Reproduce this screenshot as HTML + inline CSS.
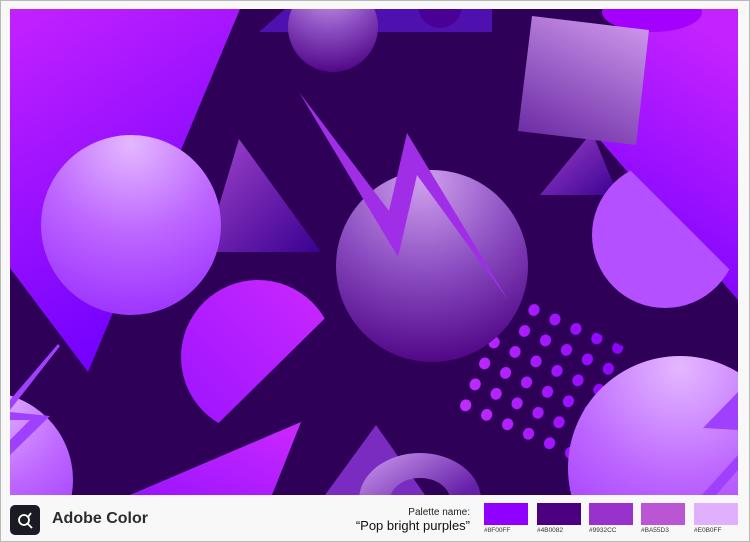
<!DOCTYPE html>
<html><head><meta charset="utf-8"><style>
html,body{margin:0;padding:0;}
body{width:750px;height:542px;background:#f8f8f8;position:relative;overflow:hidden;font-family:"Liberation Sans",sans-serif;}
.frame{position:absolute;left:0;top:0;width:748px;height:540px;border:1px solid #b8b8b8;}
svg.art{position:absolute;left:0;top:0;}
.logo{position:absolute;left:10px;top:505px;width:30px;height:30px;background:#1b1b24;border-radius:5px;}
.brand{position:absolute;left:52px;top:510px;font-size:16px;line-height:18px;font-weight:bold;color:#2c2c2c;}
.pn{position:absolute;right:280px;top:507px;font-size:10px;line-height:11px;color:#222;text-align:right;}
.pv{position:absolute;right:280px;top:518px;font-size:13px;line-height:15px;color:#111;text-align:right;}
.sw{position:absolute;top:503px;width:44px;height:22px;}
.lb{position:absolute;top:527px;font-size:6.5px;line-height:8px;color:#333;}
</style></head><body>
<div class="frame"></div>
<div class="logo"></div>
<svg class="art" width="750" height="542" viewBox="0 0 750 542">
<defs>
<clipPath id="c"><rect x="10" y="9" width="728" height="486"/></clipPath>
<linearGradient id="mag" x1="0" y1="0" x2="0.4" y2="1"><stop offset="0" stop-color="#c422ff"/><stop offset="1" stop-color="#7000ff"/></linearGradient>
<linearGradient id="mag2" x1="0.5" y1="0" x2="0.2" y2="1"><stop offset="0" stop-color="#c422ff"/><stop offset="1" stop-color="#7400ff"/></linearGradient>
<radialGradient id="sph" cx="0.5" cy="0.05" r="1"><stop offset="0" stop-color="#e4b8ff"/><stop offset="0.5" stop-color="#bd66ff"/><stop offset="1" stop-color="#9a30ff"/></radialGradient>
<radialGradient id="dsph" cx="0.45" cy="0.05" r="1"><stop offset="0" stop-color="#d0a0ee"/><stop offset="0.5" stop-color="#8a4cc0"/><stop offset="1" stop-color="#4b0082"/></radialGradient>
<linearGradient id="tri" x1="0" y1="0" x2="1" y2="1"><stop offset="0" stop-color="#a044cc"/><stop offset="1" stop-color="#3a0090"/></linearGradient>
<linearGradient id="sq" x1="0.8" y1="0" x2="0.3" y2="1"><stop offset="0" stop-color="#cc95ea"/><stop offset="1" stop-color="#7030a8"/></linearGradient>
<linearGradient id="hd" x1="1" y1="0" x2="0" y2="1"><stop offset="0" stop-color="#cc28ff"/><stop offset="1" stop-color="#9a14ff"/></linearGradient>
<linearGradient id="ring" x1="0" y1="0" x2="1" y2="0.6"><stop offset="0" stop-color="#cf9cf0"/><stop offset="1" stop-color="#6520a8"/></linearGradient>
<linearGradient id="dots" x1="0" y1="0" x2="1" y2="0"><stop offset="0" stop-color="#c832ff"/><stop offset="1" stop-color="#8400ff"/></linearGradient>
<pattern id="dp" patternUnits="userSpaceOnUse" width="23" height="23" patternTransform="translate(534,310) rotate(24.3) translate(-11.5,-11.5)"><ellipse cx="11.5" cy="11.5" rx="5.5" ry="6" fill="#fff"/></pattern>
<mask id="dm"><polygon points="534,300 624,347 575,462 455,408 487,332" fill="url(#dp)"/></mask>
<clipPath id="hdc"><polygon points="150,200 437,208 180,461 150,461"/></clipPath>
<clipPath id="rhc"><polygon points="560,150 615,155 750,290 750,330 560,330"/></clipPath>
</defs>
<g clip-path="url(#c)">
<rect x="10" y="9" width="728" height="486" fill="#2f0058"/>
<polygon points="10,9 240,9 88,372 10,268" fill="url(#mag)"/>
<polygon points="259,32 285,9 492,9 492,32" fill="#4f10b0"/>
<circle cx="440" cy="6" r="22" fill="#4a0095"/>
<circle cx="333" cy="27" r="45" fill="url(#dsph)"/>
<polygon points="239,139 321,252 205,252" fill="url(#tri)"/>
<circle cx="131" cy="225" r="90" fill="url(#sph)"/>
<polygon points="650,30 700,9 738,9 738,300 600,140" fill="url(#mag2)"/>
<ellipse cx="652" cy="12" rx="50" ry="20" fill="#a400ff"/>
<polygon points="540,195 592,132 618,195" fill="url(#tri)"/>
<polygon points="532,16 649,30 636,145 518,131" fill="url(#sq)"/>
<circle cx="665" cy="235" r="73" fill="#b450ff" clip-path="url(#rhc)"/>
<rect x="440" y="290" width="200" height="180" fill="url(#dots)" mask="url(#dm)"/>
<circle cx="432" cy="266" r="96" fill="url(#dsph)"/>
<polygon points="299,92 389,211 407,133 508,300 417,175 398,257" fill="#a02ee6"/>
<circle cx="258" cy="357" r="77" fill="url(#hd)" clip-path="url(#hdc)"/>
<polygon points="130,495 301,422 272,495" fill="url(#hd)"/>
<polygon points="376,425 325,495 425,495" fill="#7a2cc0"/>
<path d="M359,500 A61,47 0 0 1 481,500 L450,500 A30,22 0 0 0 390,500 Z" fill="url(#ring)"/>
<circle cx="680" cy="468" r="112" fill="url(#sph)"/>
<polygon points="738,392 703,428 738,430" fill="#a040ff"/>
<polygon points="738,455 702,495 716,495 738,470" fill="#a040ff"/>
<circle cx="-15" cy="480" r="88" fill="url(#sph)"/>
<polygon points="58,344 10,400 10,410 60,346" fill="#a040ff"/>
<polygon points="10,412 50,416 10,455 10,440 30,420 10,420" fill="#a040ff"/>
</g>
<g transform="translate(25,520)" stroke="#fff" stroke-width="1.8" fill="none">
<circle cx="-1" cy="0" r="5"/><line x1="2" y1="3" x2="7" y2="8"/><line x1="3" y1="-3" x2="6" y2="-7"/>
</g>
</svg>
<div class="brand">Adobe Color</div>
<div class="pn">Palette name:</div>
<div class="pv">“Pop bright purples”</div>
<div class="sw" style="left:484px;background:#8f00ff"></div>
<div class="sw" style="left:537px;background:#4b0082"></div>
<div class="sw" style="left:589px;background:#9932cc"></div>
<div class="sw" style="left:641px;background:#ba55d3"></div>
<div class="sw" style="left:694px;background:#e0b0ff"></div>
<div class="lb" style="left:484px">#8F00FF</div>
<div class="lb" style="left:537px">#4B0082</div>
<div class="lb" style="left:589px">#9932CC</div>
<div class="lb" style="left:641px">#BA55D3</div>
<div class="lb" style="left:694px">#E0B0FF</div>
</body></html>
